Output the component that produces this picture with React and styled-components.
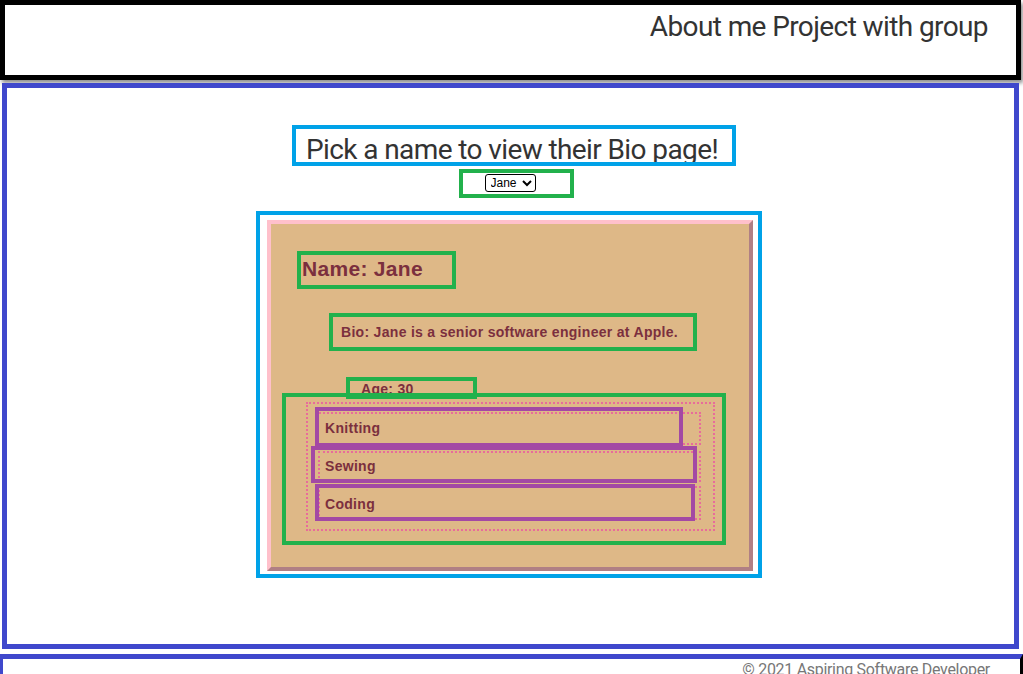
import styled, { createGlobalStyle } from "styled-components";
import { useState } from "react";

const GlobalStyle = createGlobalStyle`
  * { box-sizing: border-box; }
  body {
    margin: 0;
    background: #fff;
    font-family: "Roboto", sans-serif;
  }
`;

const people = {
  Jane: {
    name: "Jane",
    bio: "Jane is a senior software engineer at Apple.",
    age: 30,
    hobbies: ["Knitting", "Sewing", "Coding"],
  },
};

const Header = styled.header`
  height: 80px;
  margin-right: 2px;
  border: 5px solid #000;
  box-shadow: 2px 3px 4px rgba(0, 0, 0, 0.45);
  text-align: right;
  padding: 5px 28px 0 0;
  & h1 {
    margin: 0;
    font-size: 28px;
    font-weight: normal;
    color: #333;
    letter-spacing: -0.6px;
  }
`;

const Main = styled.main`
  height: 566px;
  margin: 3px 4px 0 2px;
  border: 5px solid #3f48cc;
  display: flex;
  flex-direction: column;
  align-items: center;
  padding-top: 37px;
`;

const Title = styled.h2`
  margin: 0 0 0 7px;
  border: 4px solid #00a2e8;
  padding: 0 14px 0 10px;
  height: 41px;
  font-size: 28px;
  font-weight: normal;
  line-height: 42px;
  color: #333;
  overflow: hidden;
  letter-spacing: -0.6px;
`;

const PickerBox = styled.div`
  margin: 3px 0 0 11px;
  width: 115px;
  height: 29px;
  border: 4px solid #22b14c;
  display: flex;
  justify-content: center;
  padding: 1px 12px 0 0;
  & select {
    font-family: "Liberation Sans", Arial, sans-serif;
    font-size: 12px;
    height: 18px;
    padding: 0 1px;
    border: 1px solid #000;
    border-radius: 3px;
    background: #fff;
  }
`;

const CardFrame = styled.section`
  margin: 13px 3px 0 0;
  width: 506px;
  border: 4px solid #00a2e8;
  padding: 5px 5px 3px 7px;
`;

const Card = styled.div`
  background: #deb887;
  border: 4px solid;
  border-color: #ffc0cb #b07f84 #b07f84 #ffc0cb;
  padding: 27px 23px 22px 11px;
  color: #7b2f3e;
  font-family: "Liberation Sans", Arial, sans-serif;
  font-weight: bold;
`;

const Field = styled.div`
  border: 4px solid #22b14c;
  width: ${(p) => p.$w}px;
  height: ${(p) => p.$h}px;
  margin-left: ${(p) => p.$left}px;
  margin-bottom: ${(p) => p.$bottom || 0}px;
  padding-left: ${(p) => p.$pad}px;
  font-size: ${(p) => p.$size}px;
  line-height: ${(p) => p.$line}px;
  letter-spacing: 0.3px;
  white-space: nowrap;
`;

const Hobbies = styled.div`
  position: relative;
  margin-top: -6px;
  border: 4px solid #22b14c;
  height: 152px;
  padding: 5px 7px 0 20px;
`;

const HobbyList = styled.ul`
  list-style: none;
  margin: 0;
  padding: 6px 0 0;
  height: 129px;
  border: 2px dotted #e86b9b;
`;

const Hobby = styled.li`
  position: relative;
  margin: ${(p) => p.$m};
  height: ${(p) => p.$h}px;
  border: 2px dotted #e86b9b;
`;

const HobbyName = styled.p`
  margin: ${(p) => p.$m};
  height: ${(p) => p.$h}px;
  border: 4px solid #a349a4;
  padding: 3px 0 0 ${(p) => p.$pad}px;
  font-size: 14px;
  line-height: ${(p) => p.$h - 11}px;
  letter-spacing: 0.3px;
  position: relative;
`;

const Footer = styled.footer`
  margin-top: 5px;
  height: 30px;
  border-top: 5px solid #3f48cc;
  border-left: 3px solid #3f48cc;
  border-right: 3px solid #000;
  border-bottom: 3px solid #000;
  text-align: right;
  padding-right: 30px;
  font-size: 16px;
  color: #777;
  line-height: 22px;
  letter-spacing: -0.3px;
`;

const hobbyShapes = [
  { li: "2px 12px 0 8px", liH: 33, p: "-7px 16px 0 -3px", pH: 40, pad: 6 },
  { li: "6px 12px 0 10px", liH: 31, p: "-7px 2px 0 -9px", pH: 37, pad: 10 },
  { li: "4px 12px 0 10px", liH: 34, p: "-4px 4px 0 -5px", pH: 37, pad: 6 },
];

export default function App() {
  const [selected, setSelected] = useState("Jane");
  const person = people[selected];

  return (
    <>
      <GlobalStyle />
      <Header>
        <h1>About me Project with group</h1>
      </Header>
      <Main>
        <Title>Pick a name to view their Bio page!</Title>
        <PickerBox>
          <select value={selected} onChange={(e) => setSelected(e.target.value)}>
            {Object.keys(people).map((n) => (
              <option key={n}>{n}</option>
            ))}
          </select>
        </PickerBox>
        <CardFrame>
          <Card>
            <Field $w={159} $h={38} $left={15} $bottom={24} $pad={1} $size={21} $line={28}>
              Name: {person.name}
            </Field>
            <Field $w={368} $h={38} $left={47} $bottom={26} $pad={8} $size={14} $line={30}>
              Bio: {person.bio}
            </Field>
            <Field $w={131} $h={22} $left={64} $pad={11} $size={14} $line={16}>
              Age: {person.age}
            </Field>
            <Hobbies>
              <HobbyList>
                {person.hobbies.map((h, i) => {
                  const s = hobbyShapes[i];
                  return (
                    <Hobby key={h} $m={s.li} $h={s.liH}>
                      <HobbyName $m={s.p} $h={s.pH} $pad={s.pad}>{h}</HobbyName>
                    </Hobby>
                  );
                })}
              </HobbyList>
            </Hobbies>
          </Card>
        </CardFrame>
      </Main>
      <Footer>© 2021 Aspiring Software Developer</Footer>
    </>
  );
}
